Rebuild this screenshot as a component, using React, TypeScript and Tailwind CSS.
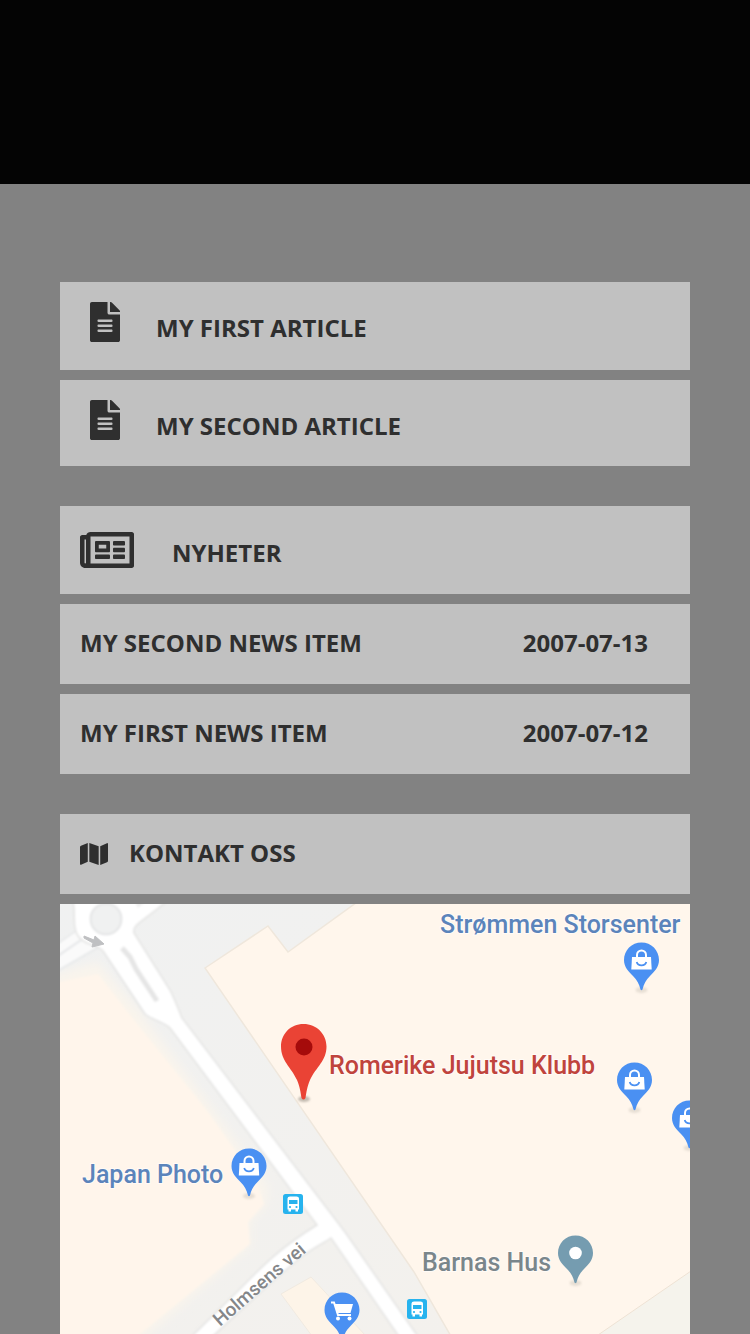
import type { ReactNode } from "react";
import { FaFileAlt, FaMap, FaRegNewspaper } from "react-icons/fa";

const articles = [
  { title: "MY FIRST ARTICLE", space: "pb-4" },
  { title: "MY SECOND ARTICLE", space: "pb-3.5" },
];

const news = [
  { title: "MY SECOND NEWS ITEM", date: "2007-07-13" },
  { title: "MY FIRST NEWS ITEM", date: "2007-07-12" },
];

function Pin({ x, y, color = "#4a90f2", children }: { x: number; y: number; color?: string; children?: ReactNode }) {
  return (
    <g transform={`translate(${x} ${y})`}>
      <ellipse cx="0" cy="30" rx="6" ry="3" fill="#8a8478" opacity=".2" filter="url(#soft)" />
      <path
        d="M0 -17.5C-9.8 -17.5 -17.5 -9.8 -17.5 0C-17.5 7 -13 11.5 -8.5 16C-4.500 20 -2.200 24 -1 29.500Q0 31 1 29.500C2.200 24 4.500 20 8.500 16C13 11.500 17.500 7 17.500 0C17.500 -9.800 9.800 -17.500 0 -17.500Z"
        fill={color}
      />
      {children}
    </g>
  );
}

function Bag() {
  return (
    <g>
      <path d="M-4.500 -2V-5a4.500 4.500 0 0 1 9 0V-2" fill="none" stroke="#fff" strokeWidth="2" />
      <path d="M-9.500 -3H9.500L10.200 9.500H-10.200Z" fill="#fff" />
      <path d="M-4.800 2C-3.500 6.500 3.500 6.500 4.800 2" fill="none" stroke="#4a90f2" strokeWidth="1.800" />
    </g>
  );
}

function Bus({ x, y }: { x: number; y: number }) {
  return (
    <g transform={`translate(${x} ${y})`}>
      <rect width="20" height="20" rx="2.500" fill="#27b3ee" />
      <path d="M4.500 4.500Q4.500 2.500 7 2.500H13.500Q16 2.500 16 4.500V15.500H15V17.500H12.500V15.500H8V17.500H5.500V15.500H4.500Z" fill="#fff" />
      <path d="M6 6H14.500V10H6Z" fill="#27b3ee" />
      <circle cx="7" cy="13" r="1.100" fill="#27b3ee" />
      <circle cx="13.500" cy="13" r="1.100" fill="#27b3ee" />
    </g>
  );
}

function StreetMap() {
  return (
    <svg
      viewBox="60 904 630 430"
      className="block w-full font-[Roboto,sans-serif] font-medium"
      role="img"
      aria-label="Romerike Jujutsu Klubb"
    >
      <defs>
        <filter id="soft" x="-30%" y="-30%" width="160%" height="160%">
          <feGaussianBlur stdDeviation="1" />
        </filter>
        <filter id="haze" x="-20%" y="-20%" width="140%" height="140%">
          <feGaussianBlur stdDeviation="5" />
        </filter>
        <linearGradient id="ground" x1="0" y1="0" x2="1" y2="1">
          <stop offset="0" stopColor="#f0f1f1" />
          <stop offset="1" stopColor="#f4f1ec" />
        </linearGradient>
      </defs>
      <rect x="60" y="904" width="630" height="430" fill="url(#ground)" />

      <path d="M40 978L98 962L140 1012L212 1108L268 1186L266 1206L250 1222V1246L138 1344H40Z" fill="#f9f4ec" filter="url(#haze)" />
      <path d="M50 984L98 974L134 1020L208 1112L256 1180L264 1204L248 1222L250 1244L140 1334L120 1350H50Z" fill="#fff5eb" filter="url(#soft)" />
      <path d="M205 968L268 926L288 952L360 900H700V1266L598 1338H452L414 1272Z" fill="#fff6ec" stroke="#efe7dc" strokeWidth="1.500" />
      <path d="M691 1271L598 1335H691Z" fill="#f5f3ec" stroke="#eee2d4" />
      <path d="M281 1294L311 1277L366 1336H312Z" fill="#fdf4e8" stroke="#f0eae1" />

      <g filter="url(#soft)">
        <path d="M50 949L76 931L104 944L52 974Z" fill="#fafafa" stroke="#e5e7e8" strokeWidth="1.500" />
        <path d="M52 960L84 938" fill="none" stroke="#e4e6e8" strokeWidth="2" />
        <path
          d="M73 900C76 918 72 926 78 936C86 947 96 943 103 951L145 1014C152 1020 162 1021 170 1028L317 1225C284 1245 264 1264 238 1291L190 1338H211C245 1306 278 1276 300 1258C311 1249 324 1243 331 1238L400 1338H419L345 1232L182 1018C178 1008 175 1000 170 990L134 933C132 924 143 922 168 900Z"
          fill="#fff"
          stroke="#e3e3e2"
          strokeWidth="1.500"
        />
        <path d="M134 900L138 908L147 900Z" fill="#efefef" />
        <circle cx="106" cy="919" r="15.500" fill="#f0f1f1" stroke="#dedfe0" strokeWidth="1.500" />
        <path d="M122 948L130 957L136 969L157 1001" fill="none" stroke="#e5e5e5" strokeWidth="5" />
      </g>
      <path d="M84 936L94 940L95 936L104 944L92 947L93 943L84 938Z" fill="#bfc0c2" stroke="#bfc0c2" />

      <Pin x={641.500} y={960}><Bag /></Pin>
      <Pin x={634.500} y={1080}><Bag /></Pin>
      <Pin x={689.500} y={1118}><Bag /></Pin>
      <Pin x={249} y={1166}><Bag /></Pin>
      <Pin x={342} y={1310}>
        <path d="M-11 -7.500H-8L-4 5H9" fill="none" stroke="#fff" strokeWidth="2" />
        <path d="M-7.500 -6H11L8.500 3H-5Z" fill="#fff" />
        <circle cx="-4" cy="8.500" r="2" fill="#fff" />
        <circle cx="7.500" cy="8.500" r="2" fill="#fff" />
      </Pin>
      <Pin x={575.500} y={1253} color="#759cb0">
        <circle r="6.300" fill="#fff" />
      </Pin>

      <ellipse cx="304" cy="1099" rx="6" ry="3" fill="#6d665c" opacity=".4" filter="url(#soft)" />
      <path
        d="M303.500 1024C290.500 1024 281 1034 281 1046.500C281 1061 291 1067 297 1080C300 1087 300.500 1092 301.500 1098Q303.500 1101 305.500 1098C306.500 1092 307 1087 310 1080C316 1067 326.500 1061 326.500 1046.500C326.500 1034 316.500 1024 303.500 1024Z"
        fill="#ea4335"
      />
      <circle cx="304" cy="1047" r="8.500" fill="#a50b0b" />
      <Bus x={283} y={1194} />
      <Bus x={407} y={1299} />

      <g fontSize="25" stroke="#fff" strokeWidth="2" strokeOpacity=".6" paintOrder="stroke">
        <text x="440" y="933" fill="#5b84bb">Strømmen Storsenter</text>
        <text x="329" y="1074" fill="#c0443d">Romerike Jujutsu Klubb</text>
        <text x="82" y="1183" fill="#5b84bb">Japan Photo</text>
        <text x="422" y="1271" fill="#7a868b">Barnas Hus</text>
      </g>
      <text transform="translate(220 1327) rotate(-41)" fontSize="19" fill="#85878a">
        Holmsens vei
      </text>
    </svg>
  );
}

export default function App() {
  return (
    <div className="min-h-screen bg-[#828282] font-['Open_Sans',sans-serif] text-2xl font-bold text-[#2f2f2f]">
      <header className="h-46 bg-[#040404]" />
      <main className="flex flex-col gap-10 px-15 pt-[98px]">
        <section className="flex flex-col gap-2.5">
          {articles.map((article) => (
            <a
              key={article.title}
              href="#"
              className={`flex items-start gap-9 bg-[#c1c1c1] px-[30px] pt-5 leading-[52px] ${article.space}`}
            >
              <FaFileAlt className="h-10 w-[30px] shrink-0" />
              <h2>{article.title}</h2>
            </a>
          ))}
        </section>

        <section className="flex flex-col gap-2.5">
          <div className="flex items-center gap-[38px] bg-[#c1c1c1] p-5">
            <FaRegNewspaper className="h-12 w-[54px] shrink-0" />
            <h2 className="pt-1.5">NYHETER</h2>
          </div>
          {news.map((item) => (
            <a
              key={item.date}
              href="#"
              className="flex items-center justify-between bg-[#c1c1c1] pt-5 pr-[42px] pb-[22px] pl-5 leading-[38px]"
            >
              <h3>{item.title}</h3>
              <time dateTime={item.date}>{item.date}</time>
            </a>
          ))}
        </section>

        <section className="flex flex-col gap-2.5">
          <div className="flex items-center gap-[21px] bg-[#c1c1c1] p-5 leading-[38px]">
            <FaMap className="h-7 w-7 shrink-0" />
            <h2 className="pb-0.5">KONTAKT OSS</h2>
          </div>
          <StreetMap />
        </section>
      </main>
    </div>
  );
}
